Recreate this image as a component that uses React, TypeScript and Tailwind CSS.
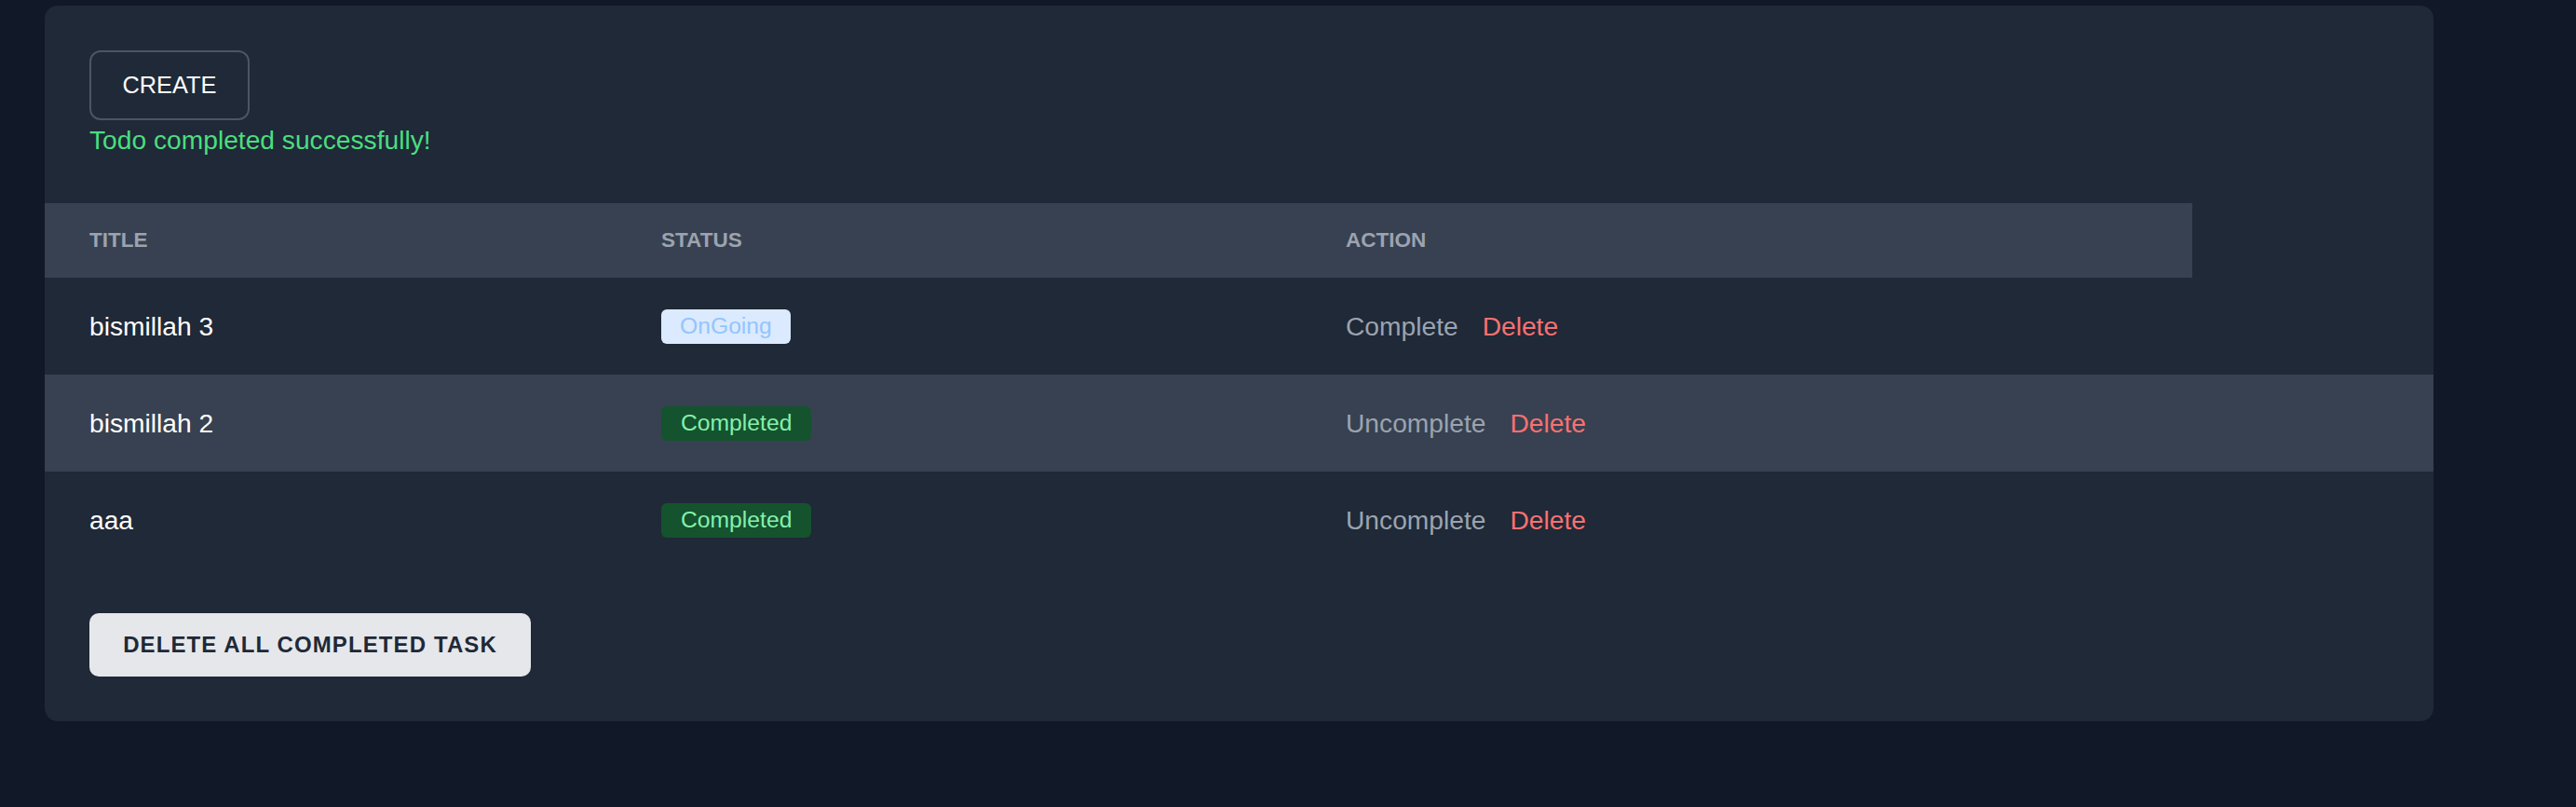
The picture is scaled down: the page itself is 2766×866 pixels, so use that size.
import React from 'react';

type Todo = {
  id: number;
  title: string;
  done: boolean;
};

const todos: Todo[] = [
  { id: 3, title: 'bismillah 3', done: false },
  { id: 2, title: 'bismillah 2', done: true },
  { id: 1, title: 'aaa', done: true },
];

function StatusBadge({ done }: { done: boolean }) {
  if (done) {
    return (
      <span className="inline-flex h-[37px] items-center rounded-[6px] bg-[#14532d] px-[21px] text-[24.7px] text-[#86efac]">
        Completed
      </span>
    );
  }
  return (
    <span className="inline-flex h-[37px] items-center rounded-[6px] bg-[#dbeafe] px-[20px] text-[24.7px] text-[#93c5fd]">
      OnGoing
    </span>
  );
}

export default function App() {
  return (
    <div className="h-[866px] w-full overflow-hidden bg-[#111827] pt-[6px] font-['Liberation_Sans',Arial,sans-serif]">
      <div className="ml-[48px] w-[2565px] rounded-[14px] bg-[#1f2937] py-[48px]">
        {/* top: create + flash message */}
        <div className="px-[48px]">
          <button className="flex h-[75px] w-[172px] items-center justify-center rounded-[12px] border-2 border-[#4b5563] text-[25.4px] text-white">
            CREATE
          </button>
          <p className="text-[28.2px] leading-[42px] text-[#4ade80]">Todo completed successfully!</p>
        </div>

        {/* table */}
        <div className="mt-[47px]">
          <div className="grid h-[80px] w-[2306px] grid-cols-[614px_735px_1fr] items-center bg-[#374151] text-[22.5px] font-semibold uppercase text-[#9ca3af]">
            <div className="pl-[48px]">Title</div>
            <div className="pl-[48px]">Status</div>
            <div className="pl-[48px]">Action</div>
          </div>
          {todos.map((todo, i) => (
            <div
              key={todo.id}
              className={`grid h-[104px] grid-cols-[614px_735px_1fr] items-center text-[28.2px] ${i === 1 ? 'bg-[#374151]' : ''}`}
            >
              <div className="pl-[48px] text-white">{todo.title}</div>
              <div className="flex pl-[48px]">
                <StatusBadge done={todo.done} />
              </div>
              <div className="flex items-center gap-[26px] pl-[48px]">
                <button className="text-[#9ca3af]">{todo.done ? 'Uncomplete' : 'Complete'}</button>
                <button className="text-[#f87171]">Delete</button>
              </div>
            </div>
          ))}
        </div>

        <div className="mt-[48px] px-[48px]">
          <button className="flex h-[68px] w-[474px] items-center justify-center rounded-[10px] bg-[#e5e7eb] text-[24px] font-semibold tracking-[1.1px] text-[#1f2937]">
            DELETE ALL COMPLETED TASK
          </button>
        </div>
      </div>
    </div>
  );
}
